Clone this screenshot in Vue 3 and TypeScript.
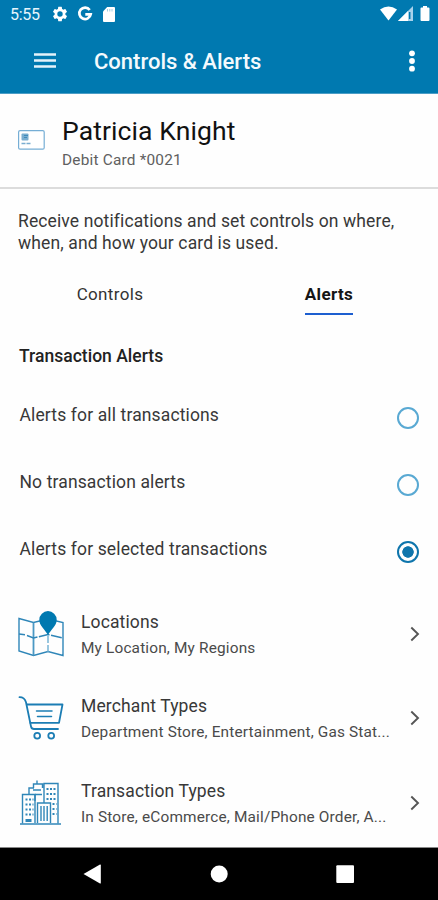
<script setup lang="ts">
import { ref } from 'vue'

type Tab = 'Controls' | 'Alerts'
type IconName = 'map' | 'cart' | 'city'
interface Category {
  icon: IconName
  title: string
  detail: string
}

const tabs: Tab[] = ['Controls', 'Alerts']
const activeTab = ref<Tab>('Alerts')

const options: string[] = [
  'Alerts for all transactions',
  'No transaction alerts',
  'Alerts for selected transactions',
]
const selected = ref<number>(2)

const categories: Category[] = [
  { icon: 'map', title: 'Locations', detail: 'My Location, My Regions' },
  { icon: 'cart', title: 'Merchant Types', detail: 'Department Store, Entertainment, Gas Stat...' },
  { icon: 'city', title: 'Transaction Types', detail: 'In Store, eCommerce, Mail/Phone Order, A...' },
]
</script>

<template>
  <div class="screen">
    <div class="status">
      <span class="clock">5:55</span>
      <svg class="gear" viewBox="0 0 24 24" width="18" height="18">
        <path fill="#fff" fill-rule="evenodd" d="M19.140 12.940c.04-.3.060-.61.060-.94s-.020-.64-.070-.94l2.030-1.580a.49.49 0 0 0 .12-.61l-1.920-3.320a.49.49 0 0 0-.59-.22l-2.390.96a7 7 0 0 0-1.620-.94l-.36-2.540a.48.48 0 0 0-.48-.41h-3.840a.48.48 0 0 0-.47.41l-.36 2.540a7 7 0 0 0-1.620.94l-2.390-.96a.48.48 0 0 0-.59.22L2.740 8.870a.48.48 0 0 0 .12.61l2.030 1.580a6 6 0 0 0 0 1.880l-2.030 1.580a.49.49 0 0 0-.12.61l1.920 3.320c.12.22.37.29.59.22l2.390-.96c.5.38 1.030.7 1.620.94l.36 2.540c.05.24.24.41.48.41h3.840c.24 0 .44-.17.47-.41l.36-2.540a7 7 0 0 0 1.620-.94l2.390.96c.22.08.47 0 .59-.22l1.920-3.320a.47.47 0 0 0-.12-.61zM12 15.600a3.600 3.600 0 1 1 0-7.200 3.600 3.600 0 0 1 0 7.200z" />
      </svg>
      <svg class="google" viewBox="0 0 16 16" width="16" height="16">
        <path fill="none" stroke="#fff" stroke-width="2.700" d="M12.700 4A5.700 5.700 0 1 0 13.700 8.300H8.300" />
      </svg>
      <svg class="sd" viewBox="0 0 12 15" width="12" height="15">
        <path fill="#fff" d="M4.200 0H11q1 0 1 1v13q0 1-1 1H1q-1 0-1-1V4.500z" />
        <path stroke="#0079b0" stroke-width=".8" d="M4.500 2v2.500M6.800 2v2.500M9 2v2.500" opacity=".45" />
      </svg>
      <span class="grow"></span>
      <svg class="signals" viewBox="0 0 50 16" width="50" height="16">
        <path fill="#fff" d="M0 3.500Q8.500-2.500 17 3.500L8.500 14.500z" />
        <path fill="#a9d2eb" d="M33 0v15H18z" />
        <path fill="#fff" d="M28 5v10H18z" />
        <path stroke="#0079b0" stroke-width="1.500" d="M29.700 6v7" />
        <path fill="#fff" d="M41.500 1.500H43V0h4v1.500h1.500q1 0 1 1V14q0 1-1 1h-7q-1 0-1-1V2.500q0-1 1-1z" />
      </svg>
    </div>

    <header class="bar">
      <svg viewBox="0 0 22 15" width="22" height="15">
        <path stroke="#e3f2fa" stroke-width="2.300" d="M0 1.500h22M0 7.500h22M0 13.500h22" />
      </svg>
      <h1>Controls &amp; Alerts</h1>
      <svg viewBox="0 0 6 22" width="6" height="22">
        <g fill="#fff"><circle cx="3" cy="3.300" r="2.900" /><circle cx="3" cy="11" r="2.900" /><circle cx="3" cy="18.700" r="2.900" /></g>
      </svg>
    </header>

    <section class="account">
      <svg viewBox="0 0 27 20" width="27" height="20">
        <rect x=".6" y=".6" width="25.600" height="18.600" rx="1.500" fill="#fff" stroke="#76aed5" stroke-width="1.200" />
        <rect x="3.500" y="3.500" width="7" height="7" rx="1" fill="#79add0" />
        <path stroke="#3f8bbb" stroke-width="1" d="M6 5.500h4M6 7.500h3" />
        <path stroke="#79add0" stroke-width="1.500" stroke-dasharray="4 1" d="M3.500 13.500h10" />
      </svg>
      <div>
        <h2>Patricia Knight</h2>
        <p>Debit Card *0021</p>
      </div>
    </section>

    <main class="content">
      <p class="intro">Receive notifications and set controls on where,<br />when, and how your card is used.</p>

      <nav class="tabs">
        <button v-for="tab in tabs" :key="tab" type="button" @click="activeTab = tab">
          <span :class="{ active: activeTab === tab }">{{ tab }}</span>
        </button>
      </nav>

      <h3>Transaction Alerts</h3>

      <div class="options" role="radiogroup">
        <div
          v-for="(option, i) in options"
          :key="option"
          class="option"
          role="radio"
          :aria-checked="selected === i"
          @click="selected = i"
        >
          <span class="label">{{ option }}</span>
          <span class="radio" :class="{ on: selected === i }"></span>
        </div>
      </div>

      <div class="categories">
        <div v-for="item in categories" :key="item.title" class="category">
          <svg class="pic" viewBox="0 0 48 48" width="48" height="48" fill="none" stroke="#2f86b8" stroke-width="1.400">
            <g v-if="item.icon === 'map'">
              <path d="M1 8.500L15.500 12.500 30 9 45 12.500V45.500L30 41.500 15.500 45.500 1 41z" />
              <path d="M15.500 12.500V45.500" stroke-width="1.800" stroke="#4b98c4" />
              <path d="M30 26v16" stroke="#6daed2" stroke-dasharray="7 2" />
              <path d="M1 24l6 .8M9 25.500L15.500 28 30 24.500 45 28" stroke-dasharray="11 1.500" />
              <path fill="#0079b0" stroke="none" d="M30 25C27 19.500 21.300 16 21.300 9.800a8.700 8.700 0 0 1 17.400 0C38.700 16 33 19.500 30 25z" />
            </g>
            <g v-else-if="item.icon === 'cart'" stroke="#1b7db4" stroke-width="1.800" stroke-linecap="round" stroke-linejoin="round">
              <path d="M1.500 3.200q5 0 6.500 5L13 32.500q.5 2.500 3 2.500H40" />
              <path d="M9 10.500H44.500L41 28.800H12.300" />
              <path d="M18.500 17H34M19.500 22.500H33.500" stroke-width="1.500" />
              <circle cx="19.200" cy="41.800" r="2.900" />
              <circle cx="33.200" cy="41.800" r="2.900" />
            </g>
            <g v-else>
              <path d="M4.500 44.500V15.500H17V44M11 15V9h5M15.500 9V5h9v4M19 5V1.500M26 24V4.500H40V44.500" />
              <path d="M17 22V16M19.500 44V24H32.500V44" />
              <path stroke-width="1.800" stroke-dasharray="2 1.500" d="M7.500 20.500h8M7.500 25.500h8M7.500 30.500h8M7.500 35.500h8M28.500 10h9M28.500 15h9M28.500 20h9M34.500 25h4M34.500 30h4M34.500 35h4" />
              <path d="M15 11h8M17 15.500h7M23 27v15M26 27v15M29.200 27v15" />
              <path stroke-width="3" d="M7.500 41.500h6" />
              <path d="M2 45h41" />
            </g>
          </svg>
          <div class="text">
            <div class="title">{{ item.title }}</div>
            <div class="detail">{{ item.detail }}</div>
          </div>
          <svg class="chevron" viewBox="0 0 10 16" width="10" height="16">
            <path fill="none" stroke="#555" stroke-width="1.900" d="M1.300 1.500L8 8l-6.700 6.500" />
          </svg>
        </div>
      </div>
    </main>

    <footer class="navbar">
      <svg viewBox="0 0 438 52" width="438" height="52" fill="#fff">
        <path d="M83.500 26L100 16.500q.8-.3.800.8v17.400q0 1.100-.8.800z" />
        <circle cx="219.200" cy="26" r="8.500" />
        <rect x="336.300" y="17.300" width="17.700" height="17.700" rx="1" />
      </svg>
    </footer>
  </div>
</template>

<style>
body {
  margin: 0;
  background: #fff;
}
</style>

<style scoped>
.screen {
  width: 438px;
  height: 900px;
  display: flex;
  flex-direction: column;
  overflow: hidden;
  background: #fefefe;
  color: #222;
  font-family: Roboto, sans-serif;
}
h1, h2, h3, p {
  margin: 0;
}
svg {
  display: block;
  flex: none;
}
.status,
.bar,
.account,
.navbar {
  flex: none;
}
.status {
  height: 28px;
  box-sizing: border-box;
  padding: 0 8px 0 10px;
  display: flex;
  align-items: center;
  background: #0079b0;
  color: #e7f5fc;
}
.clock {
  width: 41px;
  font-size: 16px;
  letter-spacing: -0.3px;
}
.google {
  margin-left: 8px;
}
.sd {
  margin-left: 10px;
}
.grow {
  flex: 1;
}
.bar {
  height: 66px;
  box-sizing: border-box;
  padding: 0 23px 0 34px;
  display: flex;
  align-items: center;
  background: #0079b0;
  border-bottom: 1px solid #4b9dc6;
  color: #f4fafd;
}
h1 {
  flex: 1;
  margin-left: 38px;
  padding-top: 2px;
  font-size: 22px;
  font-weight: 500;
  line-height: 28px;
}
.account {
  height: 95px;
  box-sizing: border-box;
  display: flex;
  padding: 22px 18px 0;
  border-bottom: 2px solid #dcdcdc;
}
.account svg {
  margin-top: 14px;
}
.account div {
  margin-left: 17px;
}
h2 {
  color: #111;
  font-size: 26.500px;
  font-weight: 400;
  line-height: 30px;
  letter-spacing: 0.1px;
}
.account p {
  margin-top: 4px;
  font-size: 15.400px;
  line-height: 20px;
  letter-spacing: 0.2px;
  color: #606060;
}
.content {
  flex: 1;
  min-height: 0;
  overflow: hidden;
  padding: 22px 18px 0;
}
.intro {
  font-size: 17.500px;
  line-height: 21.500px;
  letter-spacing: 0.12px;
  white-space: nowrap;
  color: #383838;
}
.tabs {
  height: 70px;
  margin: 0 -18px;
  display: grid;
  grid-template-columns: 1fr 1fr;
}
.tabs button {
  display: flex;
  justify-content: center;
  padding: 28px 0 0 1px;
  border: 0;
  background: none;
  font: 400 17px/24px Roboto, sans-serif;
  letter-spacing: 0.35px;
  color: #333;
}
.tabs span {
  height: 31px;
}
.tabs .active {
  color: #151515;
  font-weight: 700;
  border-bottom: 2px solid #1d5fd0;
}
h3 {
  font-size: 17.500px;
  font-weight: 500;
  line-height: 24px;
  letter-spacing: 0.02px;
  margin-top: 20px;
  padding-left: 1px;
}
.options {
  margin-top: 17px;
}
.option {
  height: 67px;
  box-sizing: border-box;
  padding: 18px 0 0 1.500px;
  display: flex;
  align-items: flex-start;
  justify-content: space-between;
}
.label {
  font-size: 17.500px;
  line-height: 24px;
  letter-spacing: 0.13px;
  color: #383838;
}
.radio {
  width: 22px;
  height: 22px;
  margin: 4px 1px 0 0;
  box-sizing: border-box;
  border: 2px solid #59a9d3;
  border-radius: 50%;
}
.radio.on {
  border-color: #0e75ac;
  background: radial-gradient(circle, #0e75ac 5.400px, #fefefe 6px);
}
.categories {
  margin-top: 19px;
}
.category {
  height: 84.300px;
  display: flex;
  align-items: flex-start;
}
.pic {
  margin-top: 5px;
}
.chevron {
  margin: 21px 0 0 1px;
}
.text {
  width: 331px;
  margin-left: 15px;
  padding-top: 4px;
  white-space: nowrap;
}
.title {
  font-size: 17.500px;
  line-height: 26px;
  letter-spacing: 0.13px;
  color: #383838;
}
.detail {
  font-size: 15.400px;
  line-height: 26px;
  letter-spacing: 0.16px;
  color: #4a4a4a;
}
.navbar {
  height: 53px;
  box-sizing: border-box;
  background: #000;
  border-top: 1px solid #888;
}
</style>
